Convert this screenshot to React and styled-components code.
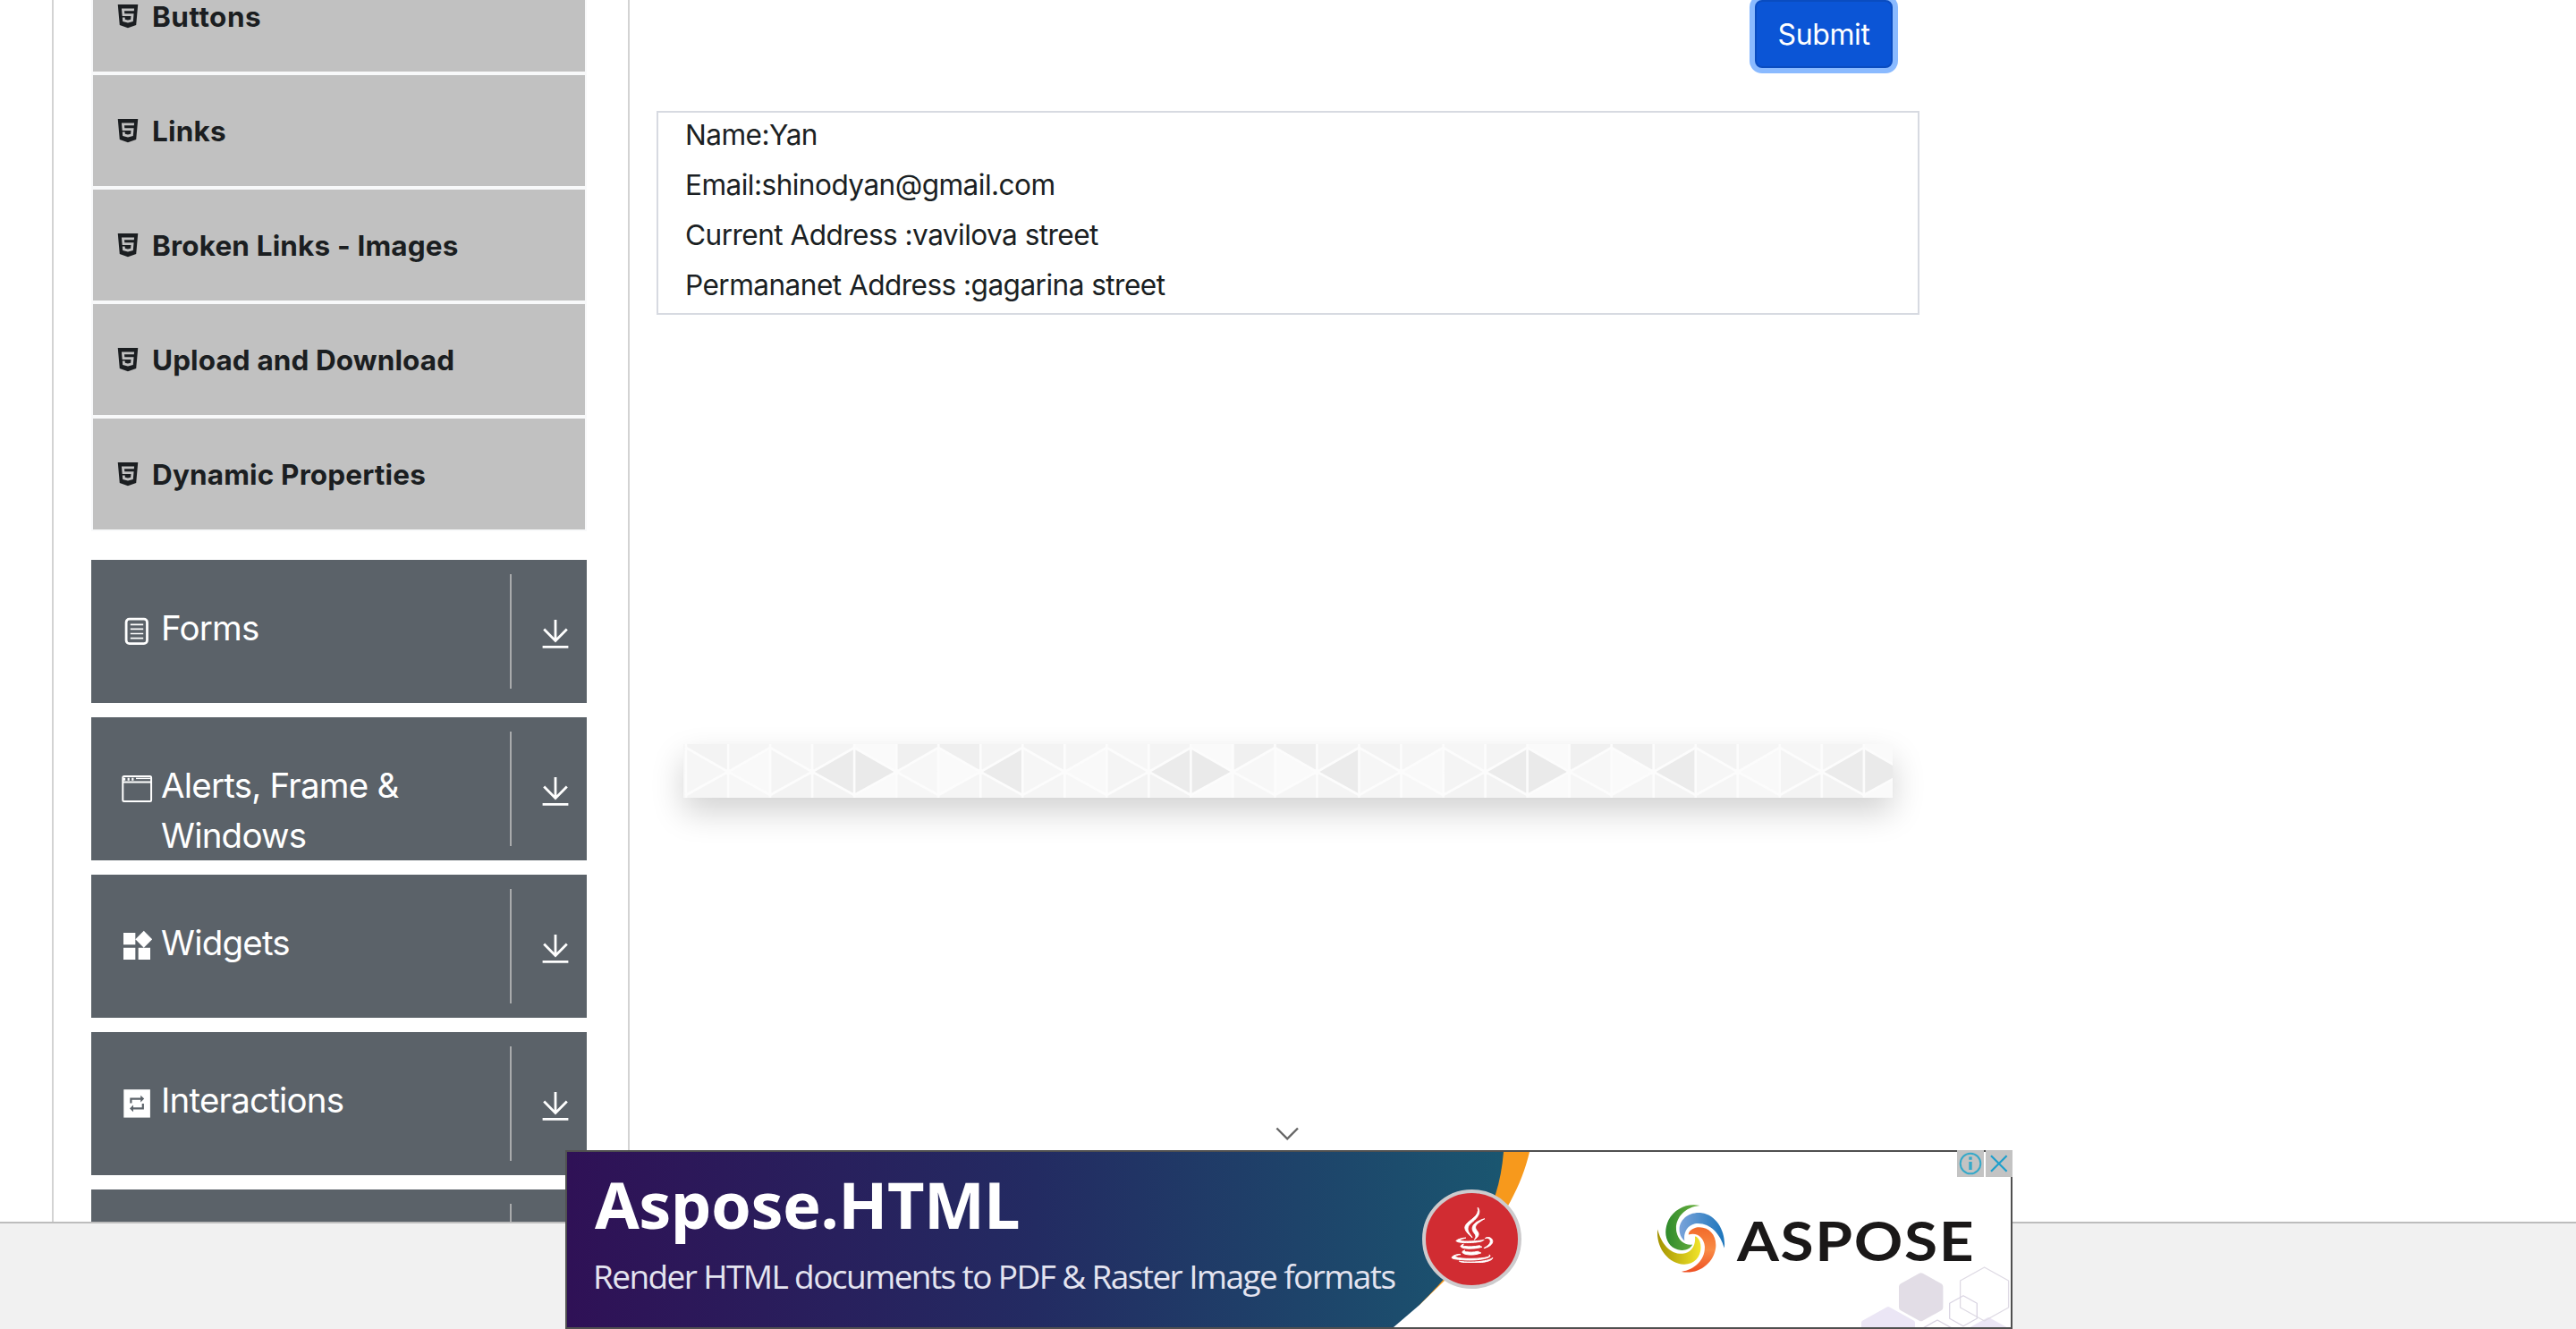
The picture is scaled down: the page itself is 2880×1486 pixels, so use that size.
import React from 'react';
import styled, { createGlobalStyle } from 'styled-components';
import { FaHtml5, FaJava } from 'react-icons/fa';
import { MdWidgets } from 'react-icons/md';

const Global = createGlobalStyle`
  * { box-sizing: border-box; }
  html, body { margin: 0; padding: 0; background: #fff; overflow: hidden; }
  body { font-family: Inter, "Liberation Sans", sans-serif; color: #1b1f23; }
  svg { display: block; flex: none; }
`;

const Page = styled.div`
  height: 1486px;
  display: flex;
  flex-direction: column;
  overflow: hidden;
`;
const Body = styled.div`
  height: 1366px;
  flex: none;
  display: flex;
  overflow: hidden;
`;
const Footer = styled.footer`
  flex: 1;
  background: #f1f1f1;
  border-top: 2px solid #bdbdbd;
`;
const Sidebar = styled.aside`
  margin-left: 58px;
  width: 646px;
  flex: none;
  border-left: 2px solid #d3d3d3;
  border-right: 2px solid #d3d3d3;
  padding: 0 46px 0 42px;
`;
const List = styled.ul`
  list-style: none;
  margin: -44px 0 32px;
  padding: 0 2px 2px;
  background: #f8f9fa;
  display: flex;
  flex-direction: column;
  gap: 4px;
`;
const Item = styled.li`
  height: 124px;
  background: #c1c1c1;
  display: flex;
  align-items: center;
  padding-left: 24px;
  gap: 12px;
  font-size: 31.5px;
  font-weight: 700;
  color: #1b1e21;
  letter-spacing: ${(p) => p.$track}px;
  white-space: nowrap;
`;
const Group = styled.div`
  height: 160px;
  margin-bottom: 16px;
  background: #5b6269;
  color: #fff;
  display: flex;
  padding-left: 31px;
`;
const GroupIcon = styled.div`
  width: 40px;
  margin-top: 60px;
`;
const GroupText = styled.div`
  width: 391px;
  padding: 48px 90px 0 7px;
  margin-right: 6px;
  font-size: 38.5px;
  line-height: 56px;
  letter-spacing: -0.8px;
`;
const GroupToggle = styled.div`
  margin: 16px 0;
  width: 86px;
  border-left: 2px solid #a9abac;
  padding: 47px 0 0 29px;
`;
const Main = styled.main`
  margin-left: 30px;
  width: 1412px;
  flex: none;
  display: flex;
  flex-direction: column;
`;
const Submit = styled.button`
  align-self: flex-end;
  margin-right: 30px;
  width: 154px;
  height: 76px;
  padding: 1px 0 0;
  border: 2px solid #0a4cc0;
  border-radius: 8px;
  background: #0b55d6;
  box-shadow: 0 0 0 6px #8abaff;
  color: #fff;
  font: 400 32px Inter, "Liberation Sans", sans-serif;
  letter-spacing: -0.4px;
`;
const Output = styled.div`
  margin-top: 48px;
  height: 228px;
  border: 2px solid #d7dae1;
  padding: 0 30px;
`;
const Line = styled.p`
  margin: 0;
  height: 56px;
  line-height: 50px;
  font-size: 31.6px;
  letter-spacing: -0.55px;
  white-space: nowrap;
`;
const Strip = styled.div`
  margin: 480px 0 0 30px;
  width: 1352px;
  height: 60px;
  box-shadow: 0 16px 36px rgba(0, 0, 0, 0.18);
`;
const Anchor = styled.div`
  position: fixed;
  left: 632px;
  bottom: 0;
  width: 1618px;
  display: flex;
  flex-direction: column;
`;
const Collapse = styled.div`
  height: 28px;
  padding: 2px 0 0 793px;
`;
const Banner = styled.div`
  position: relative;
  height: 200px;
  border: 2px solid #505050;
  background: #fff;
  display: flex;
`;
const Backdrop = styled.svg`
  position: absolute;
  inset: 0;
`;
const Copy = styled.div`
  position: relative;
  width: 958px;
  padding: 9px 0 0 31px;
  color: #fff;
  white-space: nowrap;
`;
const Title = styled.div`
  font: 700 72px/98px "Noto Sans", sans-serif;
  letter-spacing: -0.5px;
`;
const Tagline = styled.div`
  margin: 6px 0 0 -2px;
  font: 400 37px/52px "Open Sans", sans-serif;
  letter-spacing: -1.6px;
  color: #e4e4f0;
`;
const Badge = styled.div`
  position: relative;
  width: 111px;
  height: 111px;
  margin: 42px 0 0 -2px;
  padding-bottom: 10px;
  border-radius: 50%;
  background: #d12c32;
  border: 4px solid #cdcbcd;
  color: #fff;
  display: flex;
  justify-content: center;
  align-items: center;
  svg { stroke: #fff; stroke-width: 8px; }
`;
const Brand = styled.div`
  position: relative;
  display: flex;
  margin-left: 151px;
  padding-top: 59px;
`;
const Wordmark = styled.div`
  margin: -6px 0 0 13px;
  font: 700 62px/90px Lato, sans-serif;
  letter-spacing: 1.5px;
  color: #1a1818;
  transform: scaleX(1.09);
  transform-origin: left;
`;
const AdChoices = styled.div`
  position: absolute;
  top: -2px;
  right: -2px;
  display: flex;
  gap: 2px;
`;
const AdButton = styled.div`
  width: 30px;
  height: 30px;
  background: #c3c3c3;
`;

const FormsIcon = () => (
  <svg width="40" height="40" viewBox="0 0 40 40" fill="none" stroke="#fff">
    <rect x="8.1" y="6.2" width="23.4" height="27.4" rx="3.6" strokeWidth="2.8" />
    <path strokeWidth="1.7" d="M12.8 12.3H27.2M12.8 17.4H27.2M12.8 22.5H27.2M12.8 27.6H27.2" />
  </svg>
);
const WindowIcon = () => (
  <svg width="40" height="40" viewBox="0 0 40 40" fill="none" stroke="#fff">
    <rect x="4.3" y="6.1" width="31.8" height="27.8" rx="1.5" strokeWidth="2" />
    <path strokeWidth="2" d="M4.3 12.6H36.1" />
    <path strokeWidth="3" strokeDasharray="2.2 2.4" d="M5 9.3H18" />
    <path strokeWidth="1.4" d="M19 8.4H35" />
  </svg>
);
const RepeatIcon = () => (
  <svg width="40" height="40" viewBox="0 0 40 40">
    <rect x="5.3" y="4.2" width="29.6" height="31.4" fill="#fff" />
    <g fill="none" stroke="#5b6269" strokeWidth="2.2">
      <path d="M13.4 19.5V14.6H25.5" />
      <path d="M26.8 20V25.4H14.5" />
    </g>
    <path fill="#5b6269" d="M24.2 10.8L28.2 14.6L24.2 18.4ZM16 21.6L12 25.4L16 29.2Z" />
  </svg>
);
const DownIcon = () => (
  <svg width="40" height="40" viewBox="0 0 40 40" fill="none" stroke="#fff" strokeWidth="2.8">
    <path d="M20 4V27M7.2 14.6L20 27.6L32.8 14.6M5.6 34.4H34.4" />
  </svg>
);

const cells = [
  ['#f6f6f6', '#f3f3f3', '#f5f5f5'],
  ['#f9f9f9', '#f5f5f5', '#f7f7f7'],
  ['#f4f4f4', '#f6f6f6', '#f3f3f3'],
  ['#ebebeb', '#f4f4f4', '#f3f3f3'],
  ['#eaeaea', '#fafafa', '#fafafa'],
  ['#f7f7f7', '#f0f0f0', '#f6f6f6'],
  ['#fafafa', '#efefef', '#f5f5f5'],
  ['#ebebeb', '#f4f4f4', '#f4f4f4'],
];
const STEP = 47.03;
const Pattern = () => (
  <svg width="1352" height="60" viewBox="0 0 1352 60">
    <rect width="1352" height="60" fill="#f6f6f6" />
    {Array.from({ length: 29 }, (_, k) => {
      const [mid, top, bottom] = cells[k % 8];
      const x0 = 3 + k * STEP;
      const x1 = x0 + STEP;
      const a = k % 2 ? x1 : x0;
      const b = k % 2 ? x0 : x1;
      return (
        <g key={k}>
          <path fill={top} d={`M${a} 0H${b}V31L${a} 4Z`} />
          <path fill={bottom} d={`M${a} 60H${b}V31L${a} 57Z`} />
          <path fill={mid} d={`M${a} 4L${b} 31L${a} 57Z`} />
          <path fill="none" stroke="#fcfcfc" strokeWidth="2.6" d={`M${a} 4L${b} 31L${a} 57M${x0} 0V60`} />
          <circle cx={b} cy="31" r="3" fill="#fcfcfc" />
        </g>
      );
    })}
  </svg>
);

const Hex = ({ x, y, r, ...rest }) => {
  const w = r * 0.9;
  return (
    <path
      strokeLinejoin="round"
      d={`M${x} ${y - r}L${x + w} ${y - r / 2}V${y + r / 2}L${x} ${y + r}L${x - w} ${y + r / 2}V${y - r / 2}Z`}
      {...rest}
    />
  );
};

const AsposeMark = () => (
  <svg width="77" height="76" viewBox="0 0 222 222">
    <defs>
      <linearGradient id="mg" x1="0" x2="1"><stop offset="0" stopColor="#2f8a2c" /><stop offset="1" stopColor="#6db33f" /></linearGradient>
      <linearGradient id="mb" x1="0" x2="1"><stop offset="0" stopColor="#7aa3da" /><stop offset="1" stopColor="#1b75bb" /></linearGradient>
      <linearGradient id="mo" x1="0" y1="0" x2="0" y2="1"><stop offset="0" stopColor="#f26a2a" /><stop offset=".5" stopColor="#f98b45" /><stop offset="1" stopColor="#ee4f23" /></linearGradient>
      <linearGradient id="my" x1="0" x2="1"><stop offset="0" stopColor="#a39200" /><stop offset="1" stopColor="#f2e529" /></linearGradient>
    </defs>
    <path fill="url(#mg)" d="M140 3C100 -6 58 12 38 50C18 92 30 136 68 147C90 152 108 146 116 130C92 134 70 118 64 90C56 50 86 8 140 3Z" />
    <path fill="url(#mb)" d="M220 142C226 90 196 34 146 27C100 22 68 54 74 90C76 102 82 112 90 118C86 92 98 68 124 62C170 56 206 92 220 142Z" />
    <path fill="url(#mo)" d="M80 219C136 230 186 190 192 140C196 100 170 70 132 74C116 77 104 86 103 98C130 88 154 108 156 136C158 180 124 212 80 219Z" />
    <path fill="url(#my)" d="M2 80C-4 140 36 192 88 195C128 196 152 160 140 120C136 110 130 104 124 104C128 134 110 158 84 160C44 162 14 128 2 80Z" />
  </svg>
);

const Art = () => (
  <Backdrop width="1614" height="196" viewBox="634 1288 1614 196">
    <defs>
      <linearGradient id="bg" gradientUnits="userSpaceOnUse" x1="634" x2="1681" y1="1288" y2="1288">
        <stop offset="0" stopColor="#2f1156" />
        <stop offset=".5" stopColor="#232b62" />
        <stop offset="1" stopColor="#1a5670" />
      </linearGradient>
    </defs>
    <path fill="#f7991c" d="M1670 1288H1710C1698 1340 1664 1390 1615 1432L1586 1460Z" />
    <path fill="url(#bg)" d="M634 1288H1681C1676 1350 1650 1396 1586 1460L1558 1484H634Z" />
    <Hex x={2111} y={1494} r={30} fill="#ebe6f5" stroke="#ebe6f5" strokeWidth="6" />
    <Hex x={2223} y={1504} r={28} fill="#ebe6f5" stroke="#ebe6f5" strokeWidth="6" />
    <Hex x={2147.7} y={1450.3} r={23} fill="#e2dde6" stroke="#e2dde6" strokeWidth="8" />
    <Hex x={2218.6} y={1447} r={30} fill="none" stroke="#dedae4" strokeWidth="1.3" />
    <Hex x={2195} y={1465.8} r={17} fill="none" stroke="#d9d4e2" strokeWidth="1.3" />
    <Hex x={2166} y={1495} r={19} fill="none" stroke="#d9d4e2" strokeWidth="1.3" />
  </Backdrop>
);

const items = [
  ['Buttons', 0.5],
  ['Links', 0.2],
  ['Broken Links - Images', 0.15],
  ['Upload and Download', 0.1],
  ['Dynamic Properties', 0.15],
];
const groups = [
  ['Forms', <FormsIcon />],
  ['Alerts, Frame & Windows', <WindowIcon />],
  ['Widgets', <MdWidgets size={40} />],
  ['Interactions', <RepeatIcon />],
  ['', null],
];
const lines = ['Name:Yan', 'Email:shinodyan@gmail.com', 'Current Address :vavilova street', 'Permananet Address :gagarina street'];

export default function App() {
  return (
    <Page>
      <Global />
      <Body>
        <Sidebar>
          <List>
            {items.map(([label, track]) => (
              <Item key={label} $track={track}><FaHtml5 size={30} />{label}</Item>
            ))}
          </List>
          {groups.map(([label, icon]) => (
            <Group key={label}>
              <GroupIcon>{icon}</GroupIcon>
              <GroupText>{label}</GroupText>
              <GroupToggle>{label && <DownIcon />}</GroupToggle>
            </Group>
          ))}
        </Sidebar>
        <Main>
          <Submit>Submit</Submit>
          <Output>
            {lines.map((l) => <Line key={l}>{l}</Line>)}
          </Output>
          <Strip><Pattern /></Strip>
        </Main>
      </Body>
      <Footer />
      <Anchor>
        <Collapse>
          <svg width="28" height="16" viewBox="0 0 28 16" fill="none" stroke="#666" strokeWidth="2.4"><path d="M2.4 1.5L14.2 13.4L26 1.5" /></svg>
        </Collapse>
        <Banner>
          <Art />
          <Copy>
            <Title>Aspose.HTML</Title>
            <Tagline>Render HTML documents to PDF &amp; Raster Image formats</Tagline>
          </Copy>
          <Badge><FaJava size={62} /></Badge>
          <Brand>
            <AsposeMark />
            <Wordmark>ASPOSE</Wordmark>
          </Brand>
          <AdChoices>
            <AdButton>
              <svg width="30" height="30" viewBox="0 0 30 30" fill="none" stroke="#35a9c9">
                <circle cx="15" cy="15" r="11.3" strokeWidth="2" />
                <path strokeWidth="3.4" d="M15 13V22M15 7.6V10.8" />
              </svg>
            </AdButton>
            <AdButton>
              <svg width="30" height="30" viewBox="0 0 30 30" fill="none" stroke="#1f9fcc" strokeWidth="2.2">
                <path d="M6 6.3L23.6 23.8M23.6 6.3L6 23.8" />
              </svg>
            </AdButton>
          </AdChoices>
        </Banner>
      </Anchor>
    </Page>
  );
}
